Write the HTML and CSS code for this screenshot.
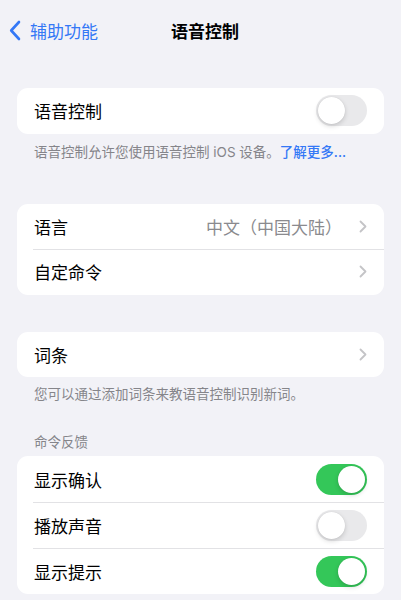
FILE: index.html
```html
<!DOCTYPE html>
<html lang="zh-CN">
<head>
<meta charset="utf-8">
<title>语音控制</title>
<link rel="stylesheet" href="styles.css">
</head>
<body>
<div class="page">
  <header class="nav">
    <div class="nav-back">
      <svg class="back-icon" width="12" height="21" viewBox="0 0 12 21"><path d="M10 2 L2.2 10.5 L10 19" fill="none" stroke="#3478f6" stroke-width="2.6" stroke-linecap="round" stroke-linejoin="round"/></svg>
      <span>辅助功能</span>
    </div>
    <div class="nav-title">语音控制</div>
    <div></div>
  </header>

  <section class="group g1">
    <div class="card">
      <div class="row">
        <span class="label">语音控制</span>
        <span class="toggle"><span class="knob"></span></span>
      </div>
    </div>
    <p class="footer f1">语音控制允许您使用语音控制 iOS 设备。<span class="link">了解更多...</span></p>
  </section>

  <section class="group g2">
    <div class="card">
      <div class="row">
        <span class="label">语言</span>
        <span class="value">中文（中国大陆）</span>
        <svg class="chev" width="8" height="13" viewBox="0 0 8 13"><path d="M1.5 1.5 L6.5 6.5 L1.5 11.5" fill="none" stroke="#c4c4c7" stroke-width="1.8" stroke-linecap="round" stroke-linejoin="round"/></svg>
      </div>
      <div class="row sep">
        <span class="label">自定命令</span>
        <svg class="chev" width="8" height="13" viewBox="0 0 8 13"><path d="M1.5 1.5 L6.5 6.5 L1.5 11.5" fill="none" stroke="#c4c4c7" stroke-width="1.8" stroke-linecap="round" stroke-linejoin="round"/></svg>
      </div>
    </div>
  </section>

  <section class="group g3">
    <div class="card">
      <div class="row">
        <span class="label">词条</span>
        <svg class="chev" width="8" height="13" viewBox="0 0 8 13"><path d="M1.5 1.5 L6.5 6.5 L1.5 11.5" fill="none" stroke="#c4c4c7" stroke-width="1.8" stroke-linecap="round" stroke-linejoin="round"/></svg>
      </div>
    </div>
    <p class="footer">您可以通过添加词条来教语音控制识别新词。</p>
  </section>

  <section class="group g4">
    <p class="header">命令反馈</p>
    <div class="card">
      <div class="row tall">
        <span class="label">显示确认</span>
        <span class="toggle on"><span class="knob"></span></span>
      </div>
      <div class="row tall sep">
        <span class="label">播放声音</span>
        <span class="toggle"><span class="knob"></span></span>
      </div>
      <div class="row tall sep">
        <span class="label">显示提示</span>
        <span class="toggle on"><span class="knob"></span></span>
      </div>
    </div>
  </section>
</div>
</body>
</html>
```

FILE: styles.css
```css
* { box-sizing: border-box; }
html, body { margin: 0; padding: 0; }
body {
  background: #f2f2f7;
  font-family: "Inter", "Noto Sans CJK SC", sans-serif;
  color: #000;
  width: 401px;
  height: 600px;
  overflow: hidden;
}
.page { display: flex; flex-direction: column; }

.nav {
  height: 60px;
  display: grid;
  grid-template-columns: 1fr auto 1fr;
  align-items: center;
  padding: 0 0 0 9px;
}
.nav-back {
  display: flex;
  align-items: center;
  gap: 9px;
  color: #3478f6;
  font-size: 17px;
}
.back-icon { display: block; }
.nav-title {
  font-size: 17px;
  font-weight: 600;
}

.group { margin: 0 17px; display: flex; flex-direction: column; }
.g1 { margin-top: 28px; }
.g2 { margin-top: 43px; }
.g3 { margin-top: 37px; }
.g4 { margin-top: 30px; }

.card {
  background: #fff;
  border-radius: 11px;
  overflow: hidden;
}
.row {
  height: 45.5px;
  display: flex;
  align-items: center;
  padding: 0 17px 0 17px;
  position: relative;
  font-size: 17px;
}
.row.tall { height: 46px; }
.row.sep::before {
  content: "";
  position: absolute;
  left: 16px;
  right: 0;
  top: 0;
  height: 1px;
  background: #e2e2e5;
}
.label { flex: 1; }
.value {
  color: #8a8a8e;
  margin-right: 17px;
}
.chev { display: block; }

.toggle {
  width: 51px;
  height: 31px;
  border-radius: 16px;
  background: #e9e9eb;
  position: relative;
  flex: none;
}
.toggle.on { background: #34c759; }
.knob {
  position: absolute;
  top: 2px;
  left: 2px;
  width: 27px;
  height: 27px;
  border-radius: 50%;
  background: #fff;
  box-shadow: 0 2px 5px rgba(0,0,0,0.16), 0 0 1px rgba(0,0,0,0.12);
}
.toggle.on .knob { left: 22px; }

.footer {
  margin: 0;
  padding: 8px 17px 0 17px;
  font-size: 13.5px;
  line-height: 18px;
  color: #85858a;
}
.f1 { padding-top: 9px; }
.link { color: #3478f6; font-weight: 500; }
.header {
  margin: 0;
  padding: 0 17px 5px 17px;
  font-size: 13.5px;
  line-height: 18px;
  color: #85858a;
}
```
